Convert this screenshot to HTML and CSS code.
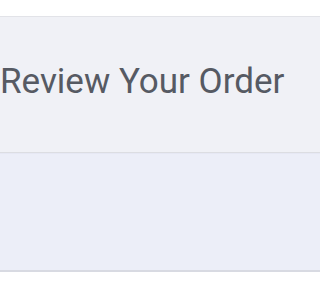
FILE: index.html
```html
<!DOCTYPE html>
<html>
<head>
<meta charset="utf-8">
<link rel="stylesheet" href="styles.css">
</head>
<body>
<div class="page">
  <div class="top"></div>
  <header class="header">
    <h1 class="title">Review Your Order</h1>
  </header>
  <section class="panel"></section>
  <div class="bottom"></div>
</div>
</body>
</html>
```
FILE: styles.css
```css
html, body {
  margin: 0;
  padding: 0;
  background: #ffffff;
  overflow: hidden;
}
.page {
  display: flex;
  flex-direction: column;
  height: 288px;
  font-family: Roboto, "Noto Sans", sans-serif;
}
.top {
  height: 16px;
  background: #ffffff;
}
.header {
  height: 135px;
  background: #f0f1f6;
  border-top: 1px solid #e2e3e8;
  border-bottom: 1px solid #dcdde2;
  display: flex;
  align-items: center;
  padding-bottom: 6px;
  box-sizing: border-box;
  height: 137px;
}
.title {
  margin: 0;
  font-size: 35px;
  line-height: 1;
  font-weight: 400;
  color: #565a63;
  white-space: nowrap;
  letter-spacing: 0;
}
.panel {
  height: 116px;
  background: #eceef8;
  border-top: 1px solid #e6e8f4;
  border-bottom: 2px solid #d8dae2;
}
.bottom {
  flex: 1;
  background: #ffffff;
}
```
